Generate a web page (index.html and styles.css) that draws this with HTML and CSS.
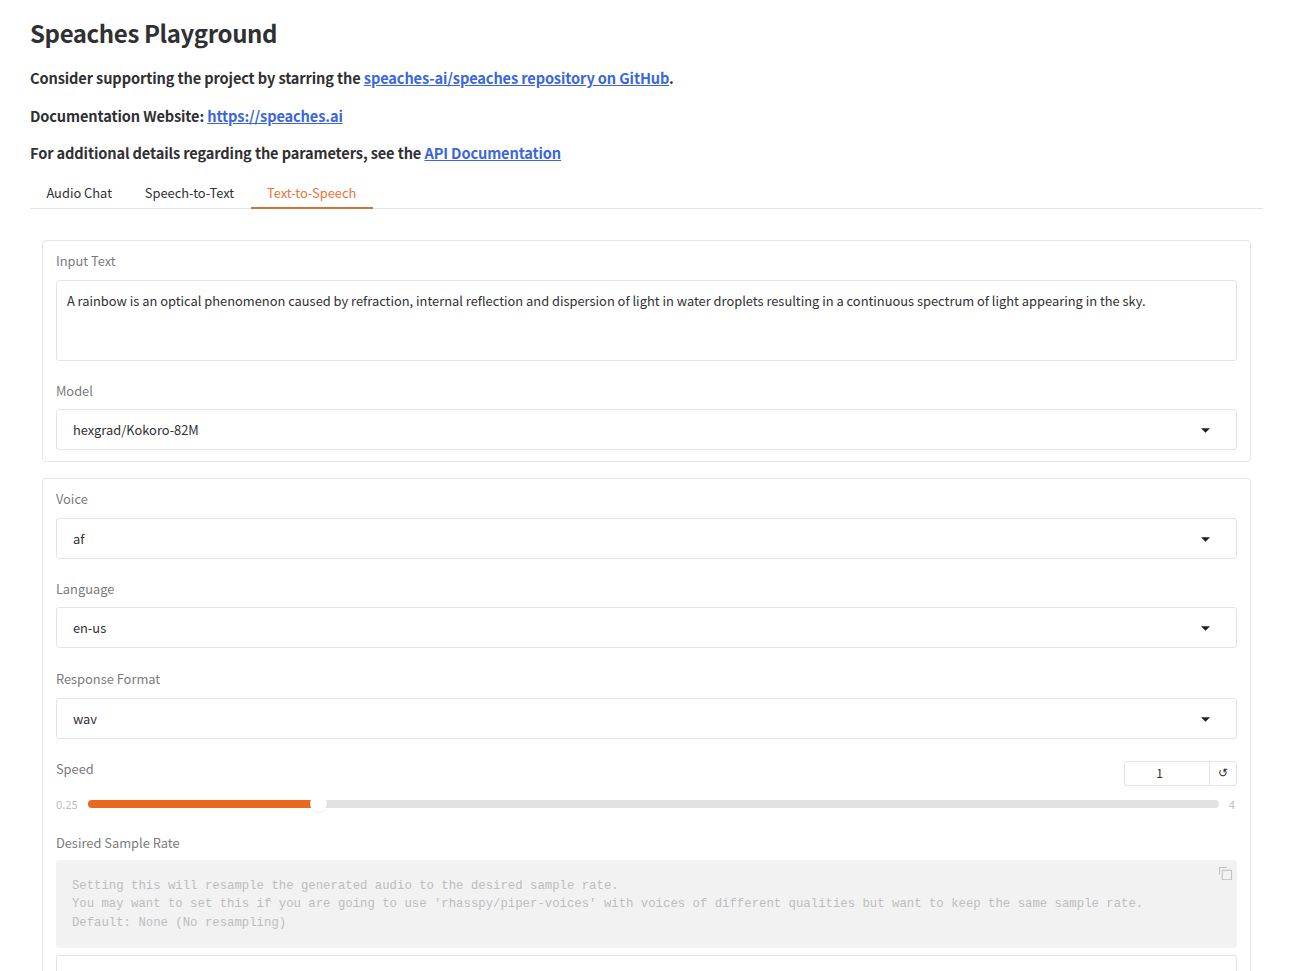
FILE: index.html
```html
<!DOCTYPE html>
<html lang="en">
<head>
<meta charset="utf-8">
<title>Speaches Playground</title>
<link rel="stylesheet" href="styles.css">
</head>
<body>
<main class="page">
  <h1>Speaches Playground</h1>
  <h3 class="intro">Consider supporting the project by starring the <a>speaches-ai/speaches repository on GitHub</a>.</h3>
  <h3 class="intro">Documentation Website: <a>https://speaches.ai</a></h3>
  <h3 class="intro">For additional details regarding the parameters, see the <a>API Documentation</a></h3>
  <nav class="tabs">
    <button class="tab">Audio Chat</button>
    <button class="tab">Speech-to-Text</button>
    <button class="tab active">Text-to-Speech</button>
  </nav>
  <div class="panels">
    <section class="panel">
      <label class="label">Input Text</label>
      <div class="textarea">A rainbow is an optical phenomenon caused by refraction, internal reflection and dispersion of light in water droplets resulting in a continuous spectrum of light appearing in the sky.</div>
      <label class="label model-label">Model</label>
      <div class="select">hexgrad/Kokoro-82M<svg class="arrow" viewBox="0 0 10 5"><path d="M0 0h10L5 5z"/></svg></div>
    </section>
    <section class="panel second">
      <label class="label">Voice</label>
      <div class="select">af<svg class="arrow" viewBox="0 0 10 5"><path d="M0 0h10L5 5z"/></svg></div>
      <label class="label language-label">Language</label>
      <div class="select">en-us<svg class="arrow" viewBox="0 0 10 5"><path d="M0 0h10L5 5z"/></svg></div>
      <label class="label">Response Format</label>
      <div class="select">wav<svg class="arrow" viewBox="0 0 10 5"><path d="M0 0h10L5 5z"/></svg></div>
      <div class="speed-head">
        <label class="label">Speed</label>
        <div class="number"><span class="value">1</span><span class="reset">↺</span></div>
      </div>
      <div class="range"><span class="min">0.25</span><div class="track"><div class="fill"></div><div class="thumb"></div></div><span class="max">4</span></div>
      <label class="label rate">Desired Sample Rate</label>
      <div class="code"><pre>Setting this will resample the generated audio to the desired sample rate.
You may want to set this if you are going to use 'rhasspy/piper-voices' with voices of different qualities but want to keep the same sample rate.
Default: None (No resampling)</pre><svg class="copy" viewBox="0 0 32 32"><path d="M28 10v18H10V10h18m0-2H10a2 2 0 0 0-2 2v18a2 2 0 0 0 2 2h18a2 2 0 0 0 2-2V10a2 2 0 0 0-2-2Z"/><path d="M4 18H2V4a2 2 0 0 1 2-2h14v2H4Z"/></svg></div>
      <div class="rate-input"></div>
    </section>
  </div>
</main>
</body>
</html>
```
FILE: styles.css
```css
* { box-sizing: border-box; }
html, body { margin: 0; height: 971px; overflow: hidden; background: #fff; }
body { font-family: "Noto Sans CJK SC", "Noto Sans", sans-serif; color: #303033; font-size: 12.87px; }
.page { display: flex; flex-direction: column; height: 971px; overflow: hidden; padding: 14px 28.5px 0 30px; }
h1 { margin: 0 0 14px; font-size: 24px; line-height: 38px; font-weight: 700; letter-spacing: -0.4px; }
.intro { margin: 0 0 13.5px; font-size: 14.6px; line-height: 24px; font-weight: 700; white-space: nowrap; letter-spacing: -0.13px; }
.intro a { color: #3b66dd; text-decoration: underline; }
.tabs { display: flex; flex: none; height: 30px; border-bottom: 1px solid #e4e4e5; }
.tab { height: 30px; padding: 0 16.4px; border: 0; border-bottom: 2px solid transparent; background: none; font: inherit; color: #303033; }
.tab.active { color: #ea7436; border-bottom-color: #d3713a; }
.panels { flex: 1; display: flex; flex-direction: column; min-height: 0; padding: 31px 12px 0 12.4px; }
.panel { flex: none; height: 222px; padding: 10px 12.8px 0 12.5px; border: 1px solid #e6e6e7; border-radius: 4px; }
.second { flex: 1; min-height: 0; height: auto; margin-top: 16px; border-bottom: 0; border-radius: 4px 4px 0 0; overflow: hidden; }
.label { display: block; height: 20px; line-height: 20px; color: #7b7b7d; margin-bottom: 9px; }
.model-label, .language-label { margin-bottom: 8px; }
.textarea { height: 81px; padding: 10px; border: 1px solid #e4e4e5; border-radius: 3px; line-height: 20px; white-space: nowrap; margin-bottom: 20px; }
.select { display: flex; align-items: center; justify-content: space-between; height: 41px; padding: 1px 26px 0 16px; margin-bottom: 20px; border: 1px solid #e4e4e5; border-radius: 3px; }
.language-label + .select { margin-bottom: 21px; }
.arrow { width: 9px; height: 5px; margin-top: 2px; fill: #202022; }
.speed-head { display: flex; justify-content: space-between; height: 35px; }
.number { display: flex; width: 113px; height: 25px; margin-top: 2px; border: 1px solid #e4e4e5; border-radius: 3px; line-height: 22px; text-align: center; font-size: 12px; }
.value { width: 84px; padding-right: 14px; }
.reset { flex: 1; border-left: 1px solid #e4e4e5; line-height: 19px; }
.range { display: flex; align-items: center; height: 20px; color: #bdbdbf; font-size: 11.3px; }
.min { width: 32px; }
.track { flex: 1; position: relative; height: 8px; border-radius: 4px; background: #e2e2e2; }
.fill { width: 20%; height: 8px; border-radius: 4px; background: #ea671e; }
.thumb { position: absolute; left: 222px; top: -5px; width: 17px; height: 17px; border-radius: 50%; background: #fff; box-shadow: 0 1px 2px rgb(0 0 0 / 8%); }
.max { width: 18px; padding-left: 10px; }
.rate { margin-top: 19px; margin-bottom: 7px; }
.code { position: relative; height: 88px; padding: 17px 16px 0; background: #f2f2f2; border-radius: 3px; color: #bdbdbf; }
.code pre { margin: 0; font: 12.32px/18.5px "Liberation Mono", monospace; }
.copy { position: absolute; right: 4px; top: 6px; width: 15px; height: 15px; fill: #bdbdbf; }
.rate-input { height: 41px; margin-top: 7px; border: 1px solid #e4e4e5; border-radius: 3px; }
```
